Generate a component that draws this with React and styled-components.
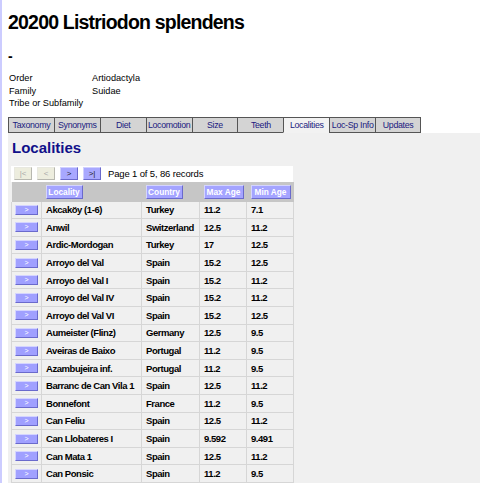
import React from "react";
import styled, { createGlobalStyle } from "styled-components";

const Global = createGlobalStyle`
  html, body { margin: 0; padding: 0; background: #fff; }
  body { font-family: "Liberation Sans", Arial, Helvetica, sans-serif; color: #000; }
`;

const Page = styled.div`
  border-left: 2px solid #ccccff;
  padding-left: 6px;
  min-height: 483px;
  box-sizing: border-box;
  overflow: hidden;
`;

const Title = styled.h1`
  margin: 0;
  padding-top: 10px;
  font-size: 19.5px;
  letter-spacing: -0.8px;
  line-height: 24px;
  font-weight: bold;
`;

const Dash = styled.div`
  margin-top: 14px;
  font-size: 14px;
  font-weight: bold;
  line-height: 16px;
`;

const Info = styled.table`
  margin-top: 8px;
  margin-left: 1px;
  border-collapse: collapse;
  font-size: 9.2px;
  td { padding: 0; height: 12.5px; line-height: 12px; vertical-align: middle; }
  td:first-child { width: 83px; }
`;

const Tabs = styled.div`
  display: flex;
  margin-top: 7px;
  width: 413px;
`;

const Tab = styled.div`
  width: 46px;
  height: 16px;
  box-sizing: border-box;
  border: 1px solid #555;
  border-right-width: ${p => (p.$last ? 1 : 0)}px;
  background: ${p => (p.$active ? "#f2f2f2" : "#d4d4d4")};
  border-bottom-color: ${p => (p.$active ? "#f2f2f2" : "#555")};
  color: #1a1a80;
  font-size: 8.8px;
  letter-spacing: -0.3px;
  line-height: 14px;
  text-align: center;
  white-space: nowrap;
  overflow: hidden;
`;

const Panel = styled.div`
  background: #f0f0f0;
  margin-right: -10px;
  padding: 6px 0 20px 3px;
`;

const Heading = styled.h2`
  margin: 0 0 0 1px;
  font-size: 15px;
  line-height: 18px;
  color: #10108a;
  font-weight: bold;
`;

const Pager = styled.div`
  margin-top: 9px;
  width: 282px;
  height: 16px;
  background: #fff;
  display: flex;
  align-items: center;
  gap: 5px;
  padding-left: 3px;
  box-sizing: border-box;
`;

const PageBtn = styled.div`
  width: 18px;
  height: 13px;
  box-sizing: border-box;
  border: 1px solid;
  border-color: ${p => (p.$off ? "#e8e8e0 #b8b8b0 #b8b8b0 #e8e8e0" : "#d0d0ff #6a6acc #6a6acc #d0d0ff")};
  background: ${p => (p.$off ? "#ededde" : "#a8a8ff")};
  color: ${p => (p.$off ? "#a8a8a8" : "#222")};
  font-size: 8px;
  line-height: 11px;
  text-align: center;
`;

const PageText = styled.span`
  margin-left: 2px;
  font-size: 9.5px;
  letter-spacing: -0.15px;
`;

const Grid = styled.table`
  border-collapse: collapse;
  width: 282px;
  table-layout: fixed;
  font-size: 9.5px;
  letter-spacing: -0.45px;
  font-weight: bold;
  th, td { padding: 0 0 0 4px; text-align: left; vertical-align: middle; white-space: nowrap; }
  td { border: 1px solid #d6d6d6; height: 16.6px; }
  tr:first-child td { border-top: none; }
  th { background: #c6c6c6; height: 20px; letter-spacing: 0; }
`;

const HeadBtn = styled.span`
  display: inline-block;
  box-sizing: border-box;
  width: ${p => p.$w}px;
  height: 14px;
  border: 1px solid;
  border-color: #d4d4ff #6a6acc #6a6acc #d4d4ff;
  background: #a4a4ff;
  color: #fff;
  font-size: 8.3px;
  line-height: 12px;
  text-align: center;
`;

const RowBtn = styled.span`
  display: block;
  box-sizing: border-box;
  width: 23px;
  height: 10px;
  margin-left: -1px;
  border: 1px solid;
  border-color: #d4d4ff #6a6acc #6a6acc #d4d4ff;
  background: #a0a0ff;
  color: #fff;
  font-size: 7px;
  letter-spacing: 0;
  line-height: 8px;
  text-align: center;
  font-weight: normal;
`;

const tabs = ["Taxonomy", "Synonyms", "Diet", "Locomotion", "Size", "Teeth", "Localities", "Loc-Sp Info", "Updates"];

const rows = [
  ["Akcaköy (1-6)", "Turkey", "11.2", "7.1"],
  ["Anwil", "Switzerland", "12.5", "11.2"],
  ["Ardic-Mordogan", "Turkey", "17", "12.5"],
  ["Arroyo del Val", "Spain", "15.2", "12.5"],
  ["Arroyo del Val I", "Spain", "15.2", "11.2"],
  ["Arroyo del Val IV", "Spain", "15.2", "11.2"],
  ["Arroyo del Val VI", "Spain", "15.2", "12.5"],
  ["Aumeister (Flinz)", "Germany", "12.5", "9.5"],
  ["Aveiras de Baixo", "Portugal", "11.2", "9.5"],
  ["Azambujeira inf.", "Portugal", "11.2", "9.5"],
  ["Barranc de Can Vila 1", "Spain", "12.5", "11.2"],
  ["Bonnefont", "France", "11.2", "9.5"],
  ["Can Feliu", "Spain", "12.5", "11.2"],
  ["Can Llobateres I", "Spain", "9.592", "9.491"],
  ["Can Mata 1", "Spain", "12.5", "11.2"],
  ["Can Ponsic", "Spain", "11.2", "9.5"],
];

export default function App() {
  return (
    <>
      <Global />
      <Page>
        <Title>20200 Listriodon splendens</Title>
        <Dash>-</Dash>
        <Info>
          <tbody>
            <tr><td>Order</td><td>Artiodactyla</td></tr>
            <tr><td>Family</td><td>Suidae</td></tr>
            <tr><td>Tribe or Subfamily</td><td></td></tr>
          </tbody>
        </Info>
        <Tabs>
          {tabs.map((t, i) => (
            <Tab key={t} $active={t === "Localities"} $last={i === tabs.length - 1}>{t}</Tab>
          ))}
        </Tabs>
        <Panel>
          <Heading>Localities</Heading>
          <Pager>
            <PageBtn $off>|&lt;</PageBtn>
            <PageBtn $off>&lt;</PageBtn>
            <PageBtn>&gt;</PageBtn>
            <PageBtn>&gt;|</PageBtn>
            <PageText>Page 1 of 5, 86 records</PageText>
          </Pager>
          <Grid>
            <colgroup>
              <col style={{ width: 30 }} />
              <col style={{ width: 100 }} />
              <col style={{ width: 58 }} />
              <col style={{ width: 47 }} />
              <col style={{ width: 47 }} />
            </colgroup>
            <thead>
              <tr>
                <th></th>
                <th><HeadBtn $w={37}>Locality</HeadBtn></th>
                <th><HeadBtn $w={37}>Country</HeadBtn></th>
                <th><HeadBtn $w={40}>Max Age</HeadBtn></th>
                <th><HeadBtn $w={40}>Min Age</HeadBtn></th>
              </tr>
            </thead>
            <tbody>
              {rows.map(r => (
                <tr key={r[0]}>
                  <td><RowBtn>&gt;</RowBtn></td>
                  {r.map((c, i) => <td key={i}>{c}</td>)}
                </tr>
              ))}
            </tbody>
          </Grid>
        </Panel>
      </Page>
    </>
  );
}
